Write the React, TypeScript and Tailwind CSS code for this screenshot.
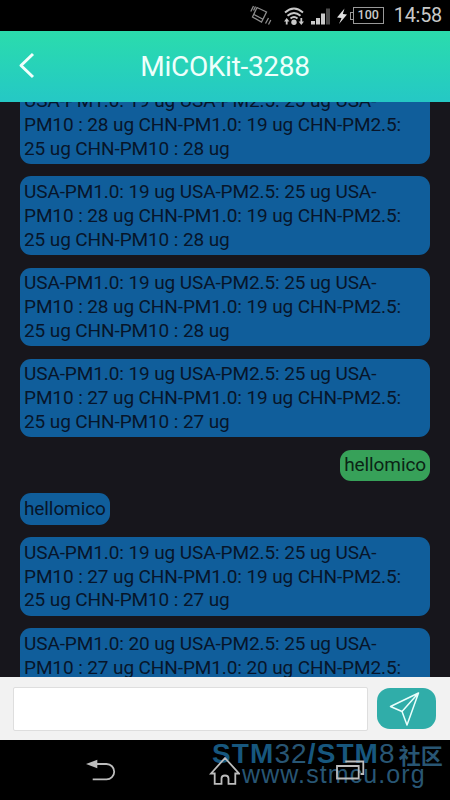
interface Message {
  id: number
  text: string
  mine?: boolean
}

const reading = (pm1: number, pm25: number, pm10: number) =>
  `USA-PM1.0: ${pm1} ug USA-PM2.5: ${pm25} ug USA-\nPM10 : ${pm10} ug CHN-PM1.0: ${pm1} ug CHN-PM2.5:\n${pm25} ug CHN-PM10 : ${pm10} ug`

const messages: Message[] = [
  { id: 1, text: reading(19, 25, 28) },
  { id: 2, text: reading(19, 25, 28) },
  { id: 3, text: reading(19, 25, 28) },
  { id: 4, text: reading(19, 25, 27) },
  { id: 5, text: 'hellomico', mine: true },
  { id: 6, text: 'hellomico' },
  { id: 7, text: reading(19, 25, 27) },
  { id: 8, text: reading(20, 25, 27) },
]

function StatusBar() {
  return (
    <div className="flex h-[31px] shrink-0 items-center justify-end bg-black pr-2 text-[#c9c9c9]">
      {/* Vibrate */}
      <svg className="h-6 w-6" viewBox="0 0 24 24" fill="none" stroke="#8c8c8c" strokeWidth="1.300">
        <path d="M7 3.500 16.500 8 11.500 18 2.500 13zM4 10.500 12.500 15" />
        <path d="M3.500 2 .800 7.500M5.500 2.500 3.500 6.500M18.500 14 15.500 19.500M20.800 16 18.500 20.500" />
      </svg>
      {/* Wifi with traffic arrows */}
      <svg className="ml-[9px] h-6 w-[22px]" viewBox="0 0 22 24" fill="none" stroke="currentColor" strokeWidth="1.900">
        <path d="M2 8.500Q11 .500 20 8.500M4.500 11.800Q11 6 17.500 11.800M7.500 14.500Q11 11.500 14.500 14.500" />
        <circle cx="11" cy="18.300" r="2.700" fill="currentColor" stroke="none" />
        <path d="M1 17.500 3.700 14 6.400 17.500H4.600V20.500H2.800V17.500zM15.600 17.500H17.400V14H19.200V17.500H21L18.300 21z" fill="currentColor" stroke="none" />
      </svg>
      {/* Signal */}
      <svg className="ml-[6px] h-6 w-[20px]" viewBox="0 0 20 24" fill="currentColor">
        <path d="M0 17h4v3.500H0zM5 14h4v6.500H5zM10 9.500h4v11h-4z" />
        <path d="M15 4.500h4v16h-4z" fill="#4b4b4b" />
      </svg>
      <svg className="ml-[6px] h-6 w-[10px]" viewBox="0 0 10 24" fill="#e0e0e0">
        <path d="M7.500 4.500 0 13.500 4.500 14 2 20 10 10.500 5.800 10z" />
      </svg>
      {/* Battery */}
      <div className="ml-[3px] flex items-center">
        <div className="h-2 w-[3px] border border-r-0 border-[#999]" />
        <div className="flex h-[17px] w-[31px] items-center justify-center border border-[#999] text-[12.500px] font-medium leading-none">
          100
        </div>
      </div>
      <span className="ml-[10px] text-[19.800px] leading-none tracking-[-0.200px]">14:58</span>
    </div>
  )
}

function Header() {
  return (
    <header className="relative flex h-[71px] shrink-0 items-center justify-center bg-linear-to-b from-[#2bdcac] to-[#25c8c5]">
      <button className="absolute left-[17px] top-[20px]" aria-label="Back">
        <svg className="h-7 w-5" viewBox="0 0 20 28" fill="none" stroke="#f2fffc" strokeWidth="3" strokeLinejoin="round">
          <path d="M16 3 4 14.500 16 26" />
        </svg>
      </button>
      <h1 className="text-[28px] leading-none tracking-[-0.300px] text-[#effffb]">MiCOKit-3288</h1>
    </header>
  )
}

function Bubble({ message }: { message: Message }) {
  if (message.mine) {
    return (
      <div className="shrink-0 self-end whitespace-pre rounded-[11px] bg-[#37a159] px-1 py-[3.800px] text-[#0b2415]">
        {message.text}
      </div>
    )
  }
  return (
    <div
      className={`shrink-0 whitespace-pre rounded-[11px] bg-[#105e9b] px-1 py-[3.800px] text-[#07152a] ${
        message.text.includes('\n') ? 'self-stretch' : 'self-start'
      }`}
    >
      {message.text}
    </div>
  )
}

function Composer() {
  return (
    <div className="flex h-[63px] shrink-0 items-center bg-[#f2f2f2] pl-[13px]">
      <input className="h-11 w-[355px] rounded-[2px] border border-[#dedede] bg-white px-2 outline-none" />
      <button className="ml-[9px] flex h-[41px] w-[59px] items-center justify-center rounded-[13px] bg-[#30ada9]" aria-label="Send">
        <svg className="h-[41px] w-[59px]" viewBox="0 0 59 41" fill="none" stroke="#eafffc" strokeWidth="1.500" strokeLinejoin="round">
          <path d="M41.500 5 13.500 18.500 25 23.500 30 37zM41.500 5 25 23.500" />
        </svg>
      </button>
    </div>
  )
}

function NavBar() {
  return (
    <nav className="relative h-[60px] shrink-0 bg-black">
      <div className="absolute left-[212px] top-0 whitespace-nowrap text-[#285674]">
        <div className="flex h-[28px] items-center font-['Liberation_Sans',sans-serif] text-[28px] leading-none tracking-[1.100px]">
          <span className="font-bold text-[#17577e]">STM</span>
          <span>32</span>
          <span className="font-bold text-[#17577e]">/STM</span>
          <span>8</span>
          <span className="ml-[3px] font-['Noto_Sans_CJK_SC',sans-serif] text-[22px] font-bold tracking-normal">社区</span>
        </div>
        <div className="ml-[30px] mt-[-8px] font-['Liberation_Sans',sans-serif] text-[25px] leading-[28px] tracking-[1.100px]">
          www.stmcu.org
        </div>
      </div>
      <div className="relative flex h-full items-center text-[#bdbdbd]">
        <svg className="ml-[85px] h-8 w-8" viewBox="0 0 32 32" fill="none" stroke="currentColor" strokeWidth="1.800">
          <path d="M11 10H21.500A7.700 7.700 0 0 1 21.500 25.400H7.700" />
          <path d="M1 10 12.300 5.800V14.200z" fill="currentColor" stroke="none" />
        </svg>
        <svg className="ml-[91px] h-8 w-8" viewBox="0 0 32 32" fill="none" stroke="currentColor" strokeWidth="1.800">
          <path d="M17 4 31 19.500H27.300V29.800H20.500V24.500Q20.500 21.500 17 21.500T13.500 24.500V29.800H6.700V19.500H3z" />
        </svg>
        <svg className="ml-[94px] h-8 w-8" viewBox="0 0 32 32" fill="none" stroke="currentColor" strokeWidth="1.800">
          <path d="M3 12H24.700V24.500H3zM11.300 7.500H29.300V20H26.500" />
        </svg>
      </div>
    </nav>
  )
}

export default function App() {
  return (
    <div className="flex h-[800px] w-[450px] flex-col overflow-hidden bg-[#17161c] font-[Roboto,sans-serif]">
      <StatusBar />
      <Header />
      {/* The list is scrolled, so the first message is cut by the header */}
      <main className="flex h-[575px] shrink-0 flex-col overflow-hidden px-5">
        <div className="mt-[-16.700px] flex flex-col gap-[12.400px] text-[19px] leading-[23.700px] tracking-[-0.100px]">
          {messages.map((message) => (
            <Bubble key={message.id} message={message} />
          ))}
        </div>
      </main>
      <Composer />
      <NavBar />
    </div>
  )
}
